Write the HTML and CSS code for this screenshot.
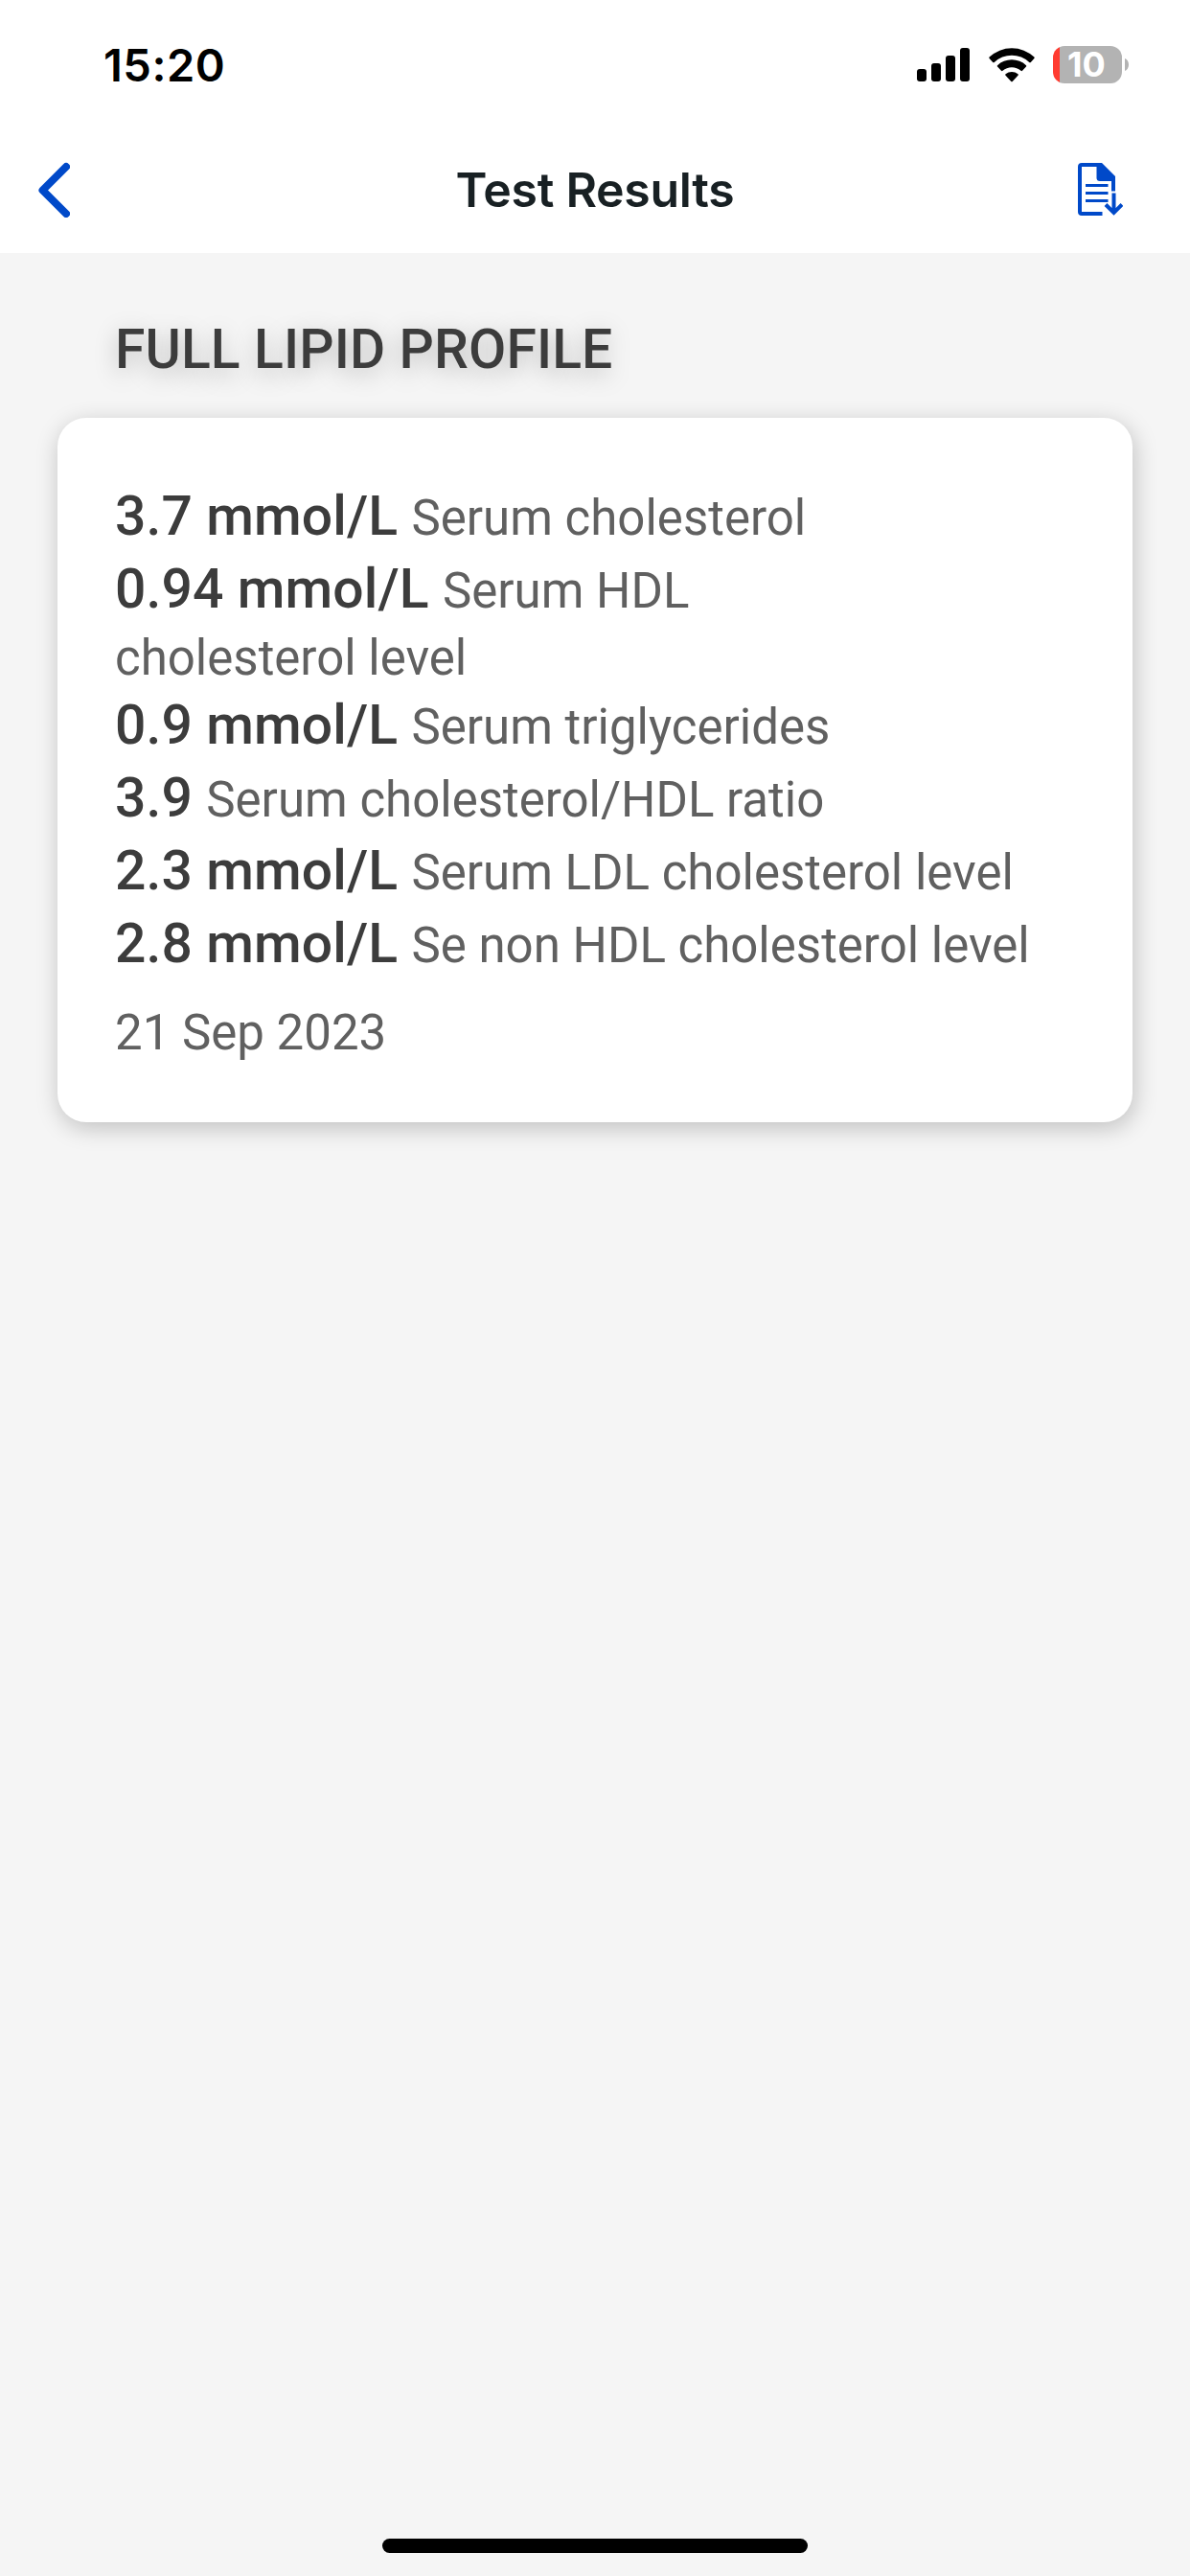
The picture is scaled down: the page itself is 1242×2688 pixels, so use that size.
FILE: index.html
```html
<!DOCTYPE html>
<html lang="en">
<head>
    <meta charset="UTF-8">
    <meta name="viewport" content="width=device-width, initial-scale=1.0">
    <title>Test Results</title>
    <link rel="stylesheet" href="styles.css">
</head>
<body>
    <div class="status-bar">
        <span class="time">15:20</span>
        <div class="status-icons">
            <svg class="signal" width="55" height="35" viewBox="0 0 55 35">
                <rect x="0" y="22" width="10" height="13" rx="3"/>
                <rect x="15" y="16" width="10" height="19" rx="3"/>
                <rect x="30" y="8" width="10" height="27" rx="3"/>
                <rect x="45" y="0" width="10" height="35" rx="3"/>
            </svg>
            <svg class="wifi" width="48" height="36" viewBox="0 0 48 36">
                <path d="M0.6 9.6Q0 10.3 .6 11L4.2 15Q5 15.7 5.8 15A26.3 26.3 0 0 1 42.2 15Q43 15.7 43.8 15L47.4 11Q48 10.3 47.4 9.6A34 34 0 0 0 .6 9.6Z"/>
                <path d="M9 18.2Q8.4 18.9 9 19.6L13 23.8Q13.7 24.5 14.5 23.8A14.5 14.5 0 0 1 33.5 23.8Q34.3 24.5 35 23.8L39 19.6Q39.6 18.9 39 18.2A22 22 0 0 0 9 18.2Z"/>
                <path d="M17.5 27.2Q16.9 28 17.5 28.7L23.3 35Q24 35.7 24.7 35L30.5 28.7Q31.1 28 30.5 27.2A10.5 10.5 0 0 0 17.5 27.2Z"/>
            </svg>
            <div class="battery">
                <div class="battery-body">10</div>
                <svg width="4" height="13" viewBox="0 0 4 13">
                    <path d="M0 0C2.6 1 4 3.8 4 6.5S2.6 12 0 13Z" fill="#b3b3b3"/>
                </svg>
            </div>
        </div>
    </div>

    <header class="nav-bar">
        <svg class="back" width="34" height="58" viewBox="0 0 34 58">
            <path d="M30 5L5.5 29.500L30 54" fill="none" stroke="#0049c9" stroke-width="8" stroke-linecap="round" stroke-linejoin="round"/>
        </svg>
        <h1>Test Results</h1>
        <svg class="download" width="47" height="55" viewBox="0 0 47 55" fill="none" stroke="#0049c9">
            <path d="M25.500 53H4Q2 53 2 51V4Q2 2 4 2H24" stroke-width="4"/>
            <path d="M37 29.500V17" stroke-width="4"/>
            <path d="M19.500 0H25L39 14V19H23Q19.500 19 19.500 15.500Z" fill="#0049c9" stroke="none"/>
            <path d="M8 23.500H31.500M8 31.500H31.500M8 39.500H31.500" stroke-width="3"/>
            <path d="M37.500 31.500V51M29 43.500L37.500 52L46 43.500" stroke-width="4"/>
        </svg>
    </header>

    <main class="content">
        <h2>FULL LIPID PROFILE</h2>
        <div class="card">
            <p class="result"><strong>3.7 mmol/L </strong>Serum cholesterol</p>
            <p class="result wrapped"><strong>0.94 mmol/L </strong>Serum HDL <span>cholesterol level</span></p>
            <p class="result"><strong>0.9 mmol/L </strong>Serum triglycerides</p>
            <p class="result"><strong>3.9 </strong>Serum cholesterol/HDL ratio</p>
            <p class="result"><strong>2.3 mmol/L </strong>Serum LDL cholesterol level</p>
            <p class="result"><strong>2.8 mmol/L </strong>Se non HDL cholesterol level</p>
            <p class="date">21 Sep 2023</p>
        </div>
    </main>

    <div class="home-indicator"></div>
</body>
</html>
```

FILE: styles.css
```css
* {
    box-sizing: border-box;
}

body {
    display: flex;
    flex-direction: column;
    margin: 0;
    height: 2688px;
    background-color: #f5f5f5;
    font-family: Roboto, sans-serif;
    color: #606060;
}

h1, h2, p {
    margin: 0;
}

.status-bar {
    display: flex;
    justify-content: space-between;
    align-items: center;
    height: 135px;
    padding: 0 64px 0 108px;
    background-color: #fff;
    font-family: Inter, sans-serif;
}

.time {
    font-size: 47px;
    font-weight: 600;
    line-height: 60px;
    letter-spacing: 0.5px;
    color: #000;
}

.status-icons {
    display: flex;
    align-items: center;
}

.wifi {
    margin-left: 20px;
}

.battery {
    display: flex;
    align-items: center;
    gap: 3px;
    margin-left: 19px;
}

.battery-body {
    width: 72px;
    height: 39px;
    padding-right: 2px;
    border-radius: 12px;
    background: linear-gradient(to right, #ff3b30 7px, #b3b3b3 7px);
    color: #fff;
    font-size: 36px;
    font-weight: 700;
    line-height: 39px;
    text-align: center;
}

.nav-bar {
    display: grid;
    grid-template-columns: 1fr auto 1fr;
    align-items: center;
    height: 129px;
    padding: 0 39px 4px;
    background-color: #fff;
    font-family: Inter, sans-serif;
}

.download {
    justify-self: end;
    margin-right: 31px;
}

h1 {
    font-size: 50px;
    font-weight: 600;
    line-height: 60px;
    letter-spacing: -0.3px;
    color: #182023;
}

.content {
    flex: 1;
    padding: 65px 60px 0;
}

h2 {
    height: 107px;
    padding-left: 60px;
    font-size: 57px;
    font-weight: 500;
    line-height: 72px;
    letter-spacing: 0.12px;
    color: #3c3c3c;
    text-shadow: 0 6px 24px rgba(0, 0, 0, 0.25);
}

.card {
    height: 735px;
    padding: 65px 60px 0;
    border-radius: 30px;
    background-color: #fff;
    box-shadow: 2px 6px 24px rgba(0, 0, 0, 0.22);
}

.result {
    height: 76px;
    font-size: 51px;
    line-height: 75px;
    white-space: nowrap;
}

.result strong {
    font-size: 57px;
    font-weight: 500;
    letter-spacing: 0.12px;
    color: #3c3c3c;
}

.wrapped {
    height: 142px;
}

.wrapped span {
    display: block;
    line-height: 65px;
}

.date {
    margin-top: 17px;
    font-size: 51px;
    line-height: 75px;
}

.home-indicator {
    align-self: center;
    width: 444px;
    height: 15px;
    margin-bottom: 24px;
    border-radius: 8px;
    background-color: #000;
}
```
